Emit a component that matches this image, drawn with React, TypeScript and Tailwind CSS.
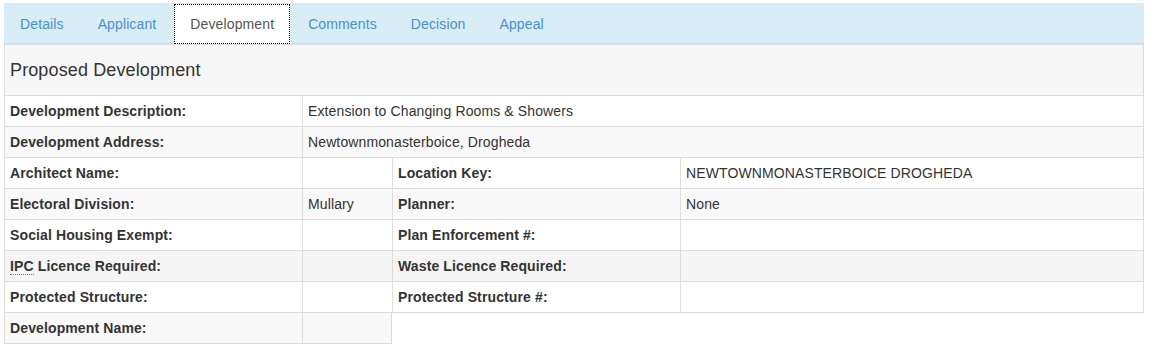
import React from 'react';

const tabs = ['Details', 'Applicant', 'Development', 'Comments', 'Decision', 'Appeal'];

type Row = {
  label: React.ReactNode;
  value?: string;
  label2?: string;
  value2?: string;
  bg: string;
  wide?: boolean;
  short?: boolean;
};

const rows: Row[] = [
  { label: 'Development Description:', value: 'Extension to Changing Rooms & Showers', bg: 'bg-white', wide: true },
  { label: 'Development Address:', value: 'Newtownmonasterboice, Drogheda', bg: 'bg-[#f9f9f9]', wide: true },
  { label: 'Architect Name:', label2: 'Location Key:', value2: 'NEWTOWNMONASTERBOICE DROGHEDA', bg: 'bg-white' },
  { label: 'Electoral Division:', value: 'Mullary', label2: 'Planner:', value2: 'None', bg: 'bg-[#f9f9f9]' },
  { label: 'Social Housing Exempt:', label2: 'Plan Enforcement #:', bg: 'bg-white' },
  {
    label: (
      <>
        <abbr className="no-underline border-b border-dotted border-[#777] cursor-help" title="Integrated Pollution Control">IPC</abbr> Licence Required:
      </>
    ),
    label2: 'Waste Licence Required:',
    bg: 'bg-[#f5f5f5]',
  },
  { label: 'Protected Structure:', label2: 'Protected Structure #:', bg: 'bg-white' },
  { label: 'Development Name:', bg: 'bg-[#f9f9f9]', short: true },
];

const cell = 'h-[31px] px-[5px] py-[5px] leading-[20px] border-l border-b border-[#ddd] whitespace-nowrap overflow-hidden';

export default function App() {
  return (
    <div className="w-[1150px] h-[352px] bg-white text-[14px] tracking-[0.12px] text-[#333] font-['Liberation_Sans',Arial,sans-serif]">
      <div className="ml-[4px] pt-[3px] w-[1140px]">
        {/* Tabs */}
        <div className="h-[41px] pt-[1px] bg-[#d9edf7] border-b border-[#ddd] flex">
          {tabs.map((t) => {
            const active = t === 'Development';
            return (
              <div
                key={t}
                className={`h-[40px] mr-[2px] px-[15px] leading-[38px] border ${
                  active ? 'bg-white border-dotted border-black text-[#555]' : 'border-transparent text-[#4a8fd6]'
                }`}
              >
                {t}
              </div>
            );
          })}
        </div>

        {/* Panel heading */}
        <div className="h-[52px] border-t border-b border-x border-[#ddd] bg-[#f7f7f7] px-[5px] flex items-center">
          <h3 className="text-[18px] leading-[20px] text-[#333]">Proposed Development</h3>
        </div>

        {/* Details table */}
        <div className="flex flex-col">
          {rows.map((r, i) => (
            <div key={i} className={`flex ${r.short ? 'w-[388px]' : 'w-[1140px]'}`}>
              <div className={`${cell} ${r.bg} w-[298px] font-bold`}>{r.label}</div>
              {r.wide ? (
                <div className={`${cell} ${r.bg} w-[842px] border-r`}>{r.value}</div>
              ) : (
                <>
                  <div className={`${cell} ${r.bg} w-[90px] ${r.short ? 'border-r' : ''}`}>{r.value}</div>
                  {!r.short && (
                    <>
                      <div className={`${cell} ${r.bg} w-[288px] font-bold`}>{r.label2}</div>
                      <div className={`${cell} ${r.bg} w-[464px] border-r`}>{r.value2}</div>
                    </>
                  )}
                </>
              )}
            </div>
          ))}
        </div>
      </div>
    </div>
  );
}
